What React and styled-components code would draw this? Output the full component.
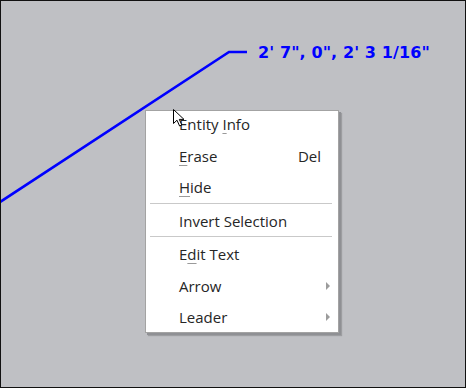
import React from "react";
import styled, { createGlobalStyle } from "styled-components";

const Global = createGlobalStyle`
  html, body { margin: 0; padding: 0; background: #bfc0c4; }
  #root { width: 466px; height: 388px; }
`;

const Canvas = styled.div`
  position: relative;
  width: 466px;
  height: 388px;
  box-sizing: border-box;
  border: 1px solid #111;
  background: #bfc0c4;
  overflow: hidden;
`;

const Drawing = styled.svg`
  position: absolute;
  left: -1px;
  top: -1px;
  width: 466px;
  height: 388px;
`;

const DimLabel = styled.div`
  position: absolute;
  left: 257px;
  top: 42px;
  font-family: "DejaVu Sans", "Liberation Sans", sans-serif;
  font-weight: bold;
  font-size: 16px;
  letter-spacing: 0.1px;
  color: #0000ff;
  white-space: nowrap;
`;

const Menu = styled.div`
  position: absolute;
  left: 144px;
  top: 109px;
  width: 194px;
  height: 223px;
  box-sizing: border-box;
  display: flex;
  flex-direction: column;
  background: #ffffff;
  border: 1px solid #a3a3a3;
  box-shadow: 2px 2px 0 #8f9094, 3px 3px 1px rgba(0, 0, 0, 0.18);
  overflow: hidden;
  font-family: "Open Sans", "Noto Sans", sans-serif;
  font-size: 15px;
  color: #262626;
`;

const Item = styled.div`
  display: flex;
  justify-content: space-between;
  align-items: flex-start;
  flex-shrink: 0;
  height: 27px;
  line-height: 27px;
  padding: 0 ${(p) => (p.$sub ? "8px" : "17px")} 4.5px 33px;
`;

const Key = styled.span`
  text-decoration: underline;
  text-decoration-color: #9a9a9a;
  text-underline-offset: 3px;
  text-decoration-thickness: 1px;
`;

const Separator = styled.div`
  flex-shrink: 0;
  height: 1px;
  margin: -3px 6px 4px 4px;
  background: #c9c9c9;
`;

const SubArrow = styled.span`
  margin-top: 9px;
  width: 0;
  height: 0;
  border-top: 4px solid transparent;
  border-bottom: 4px solid transparent;
  border-left: 4px solid #9c9c9c;
`;

const Cursor = styled.svg`
  position: absolute;
  left: 171px;
  top: 107px;
  width: 14px;
  height: 20px;
`;

const Label = ({ text, k }) => {
  if (k == null) return <span>{text}</span>;
  return (
    <span>
      {text.slice(0, k)}
      <Key>{text[k]}</Key>
      {text.slice(k + 1)}
    </span>
  );
};

const items = [
  { text: "Entity Info", k: 7 },
  { text: "Erase", k: 0, shortcut: "Del" },
  { text: "Hide", k: 0 },
  "sep",
  { text: "Invert Selection" },
  "sep",
  { text: "Edit Text", k: 1 },
  { text: "Arrow", sub: true },
  { text: "Leader", sub: true },
];

export default function App() {
  return (
    <>
      <Global />
      <Canvas>
        <Drawing viewBox="0 0 466 388">
          <polyline
            points="0,202 229,52 247,52"
            fill="none"
            stroke="#0000ff"
            strokeWidth="2.6"
          />
        </Drawing>
        <DimLabel>2' 7", 0", 2' 3 1/16"</DimLabel>
        <Menu>
          {items.map((it, i) =>
            it === "sep" ? (
              <Separator key={i} />
            ) : (
              <Item key={i} $sub={it.sub}>
                <Label text={it.text} k={it.k} />
                {it.shortcut && <span>{it.shortcut}</span>}
                {it.sub && <SubArrow />}
              </Item>
            )
          )}
        </Menu>
        <Cursor viewBox="0 0 14 20">
          <path
            d="M1.5 1.5 L1.5 15.5 L5 12.2 L7.6 18 L9.8 17 L7.3 11.4 L12 11.4 Z"
            fill="#ffffff"
            stroke="#000"
            strokeWidth="1"
            strokeLinejoin="miter"
          />
        </Cursor>
      </Canvas>
    </>
  );
}
